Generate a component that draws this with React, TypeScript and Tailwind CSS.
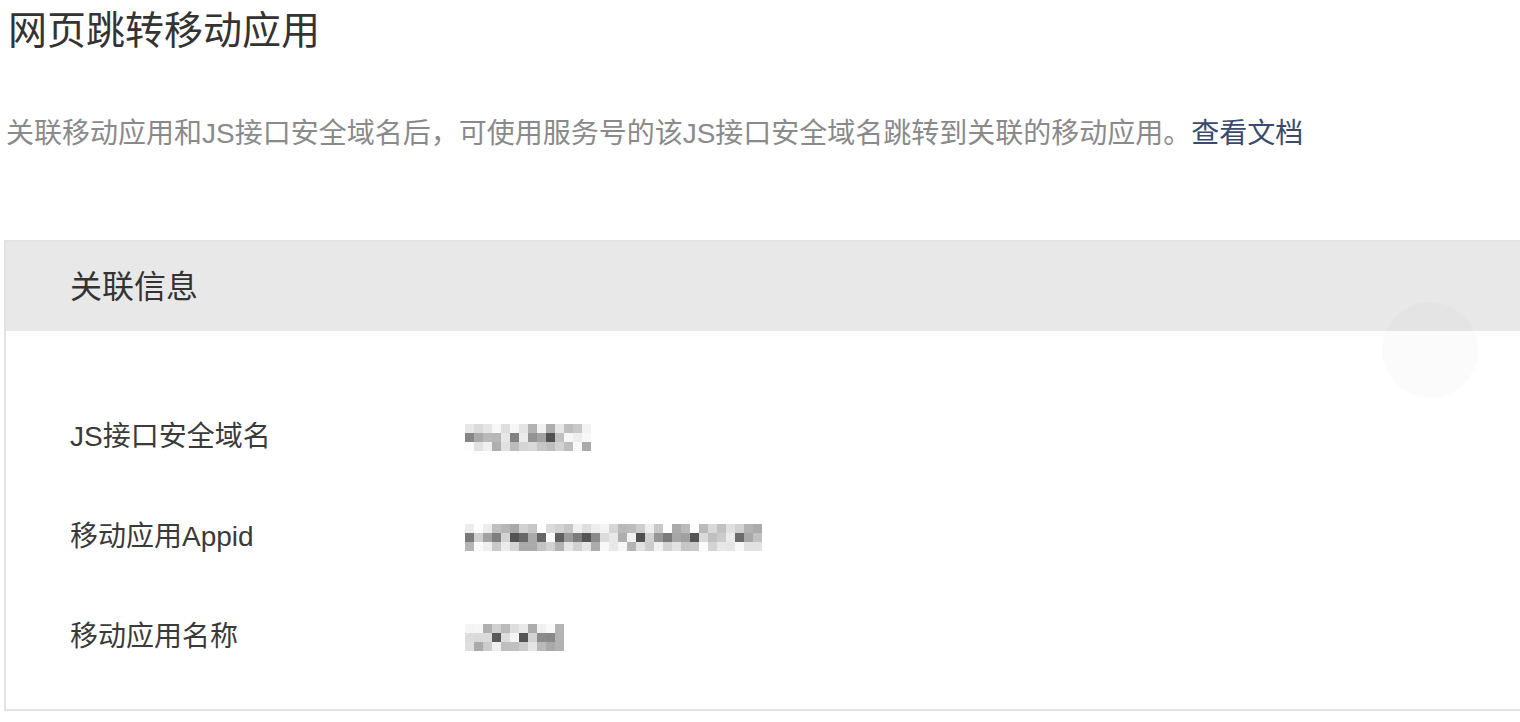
import React from 'react';

const rows = [
  { label: 'JS接口安全域名', cells: 14, seed: 3 },
  { label: '移动应用Appid', cells: 33, seed: 11 },
  { label: '移动应用名称', cells: 11, seed: 7 },
];

// pseudo-random greys for the pixelated (masked) values
const shade = (i: number, seed: number) => {
  const v = Math.abs(Math.sin(i * 12.9898 + seed * 78.233) * 43758.5453) % 1;
  return v;
};

const Mosaic = ({ cells, seed }: { cells: number; seed: number }) => {
  const size = 9;
  const rects = [];
  for (let r = 0; r < 3; r++) {
    for (let c = 0; c < cells; c++) {
      const v = shade(r * 50 + c, seed);
      const edge = r === 0 || r === 2 ? 0.5 : 1;
      const g = Math.round(255 - v * 175 * edge);
      rects.push(
        <rect key={`${r}-${c}`} x={c * size} y={r * size} width={size} height={size} fill={`rgb(${g},${g},${g})`} />
      );
    }
  }
  return (
    <svg width={cells * size} height={3 * size} viewBox={`0 0 ${cells * size} ${3 * size}`} className="blur-[0.7px]">
      {rects}
    </svg>
  );
};

export default function App() {
  return (
    <div
      className="w-[1520px] h-[722px] overflow-hidden bg-white pl-[6px]"
      style={{ fontFamily: '"Liberation Sans", "Noto Sans CJK SC", sans-serif' }}
    >
      <h1 className="h-[62px] leading-[62px] text-[39px] text-[#333] font-normal pl-[2px]">网页跳转移动应用</h1>
      <p className="mt-[52px] h-[40px] leading-[40px] text-[28px] text-[#8a8a8a]">
        关联移动应用和JS接口安全域名后，可使用服务号的该JS接口安全域名跳转到关联的移动应用。
        <a href="#" className="text-[#3a4a6e]">查看文档</a>
      </p>

      <div className="relative mt-[86px] -ml-[2px] border-t-2 border-l-2 border-b-2 border-[#e2e2e2]">
        <div className="h-[89px] bg-[#e8e8e8] flex items-center pl-[64px]">
          <span className="text-[32px] text-[#333]">关联信息</span>
        </div>
        <div className="pt-[56px] pb-[22px] bg-white">
          {rows.map((row) => (
            <div key={row.label} className="h-[100px] flex items-center pl-[64px]">
              <div className="w-[395px] text-[28px] text-[#3a3a3a]">{row.label}</div>
              <Mosaic cells={row.cells} seed={row.seed} />
            </div>
          ))}
        </div>
        <div className="absolute left-[1376px] top-[60px] w-[96px] h-[96px] rounded-full bg-black/[0.015]" />
      </div>
    </div>
  );
}
